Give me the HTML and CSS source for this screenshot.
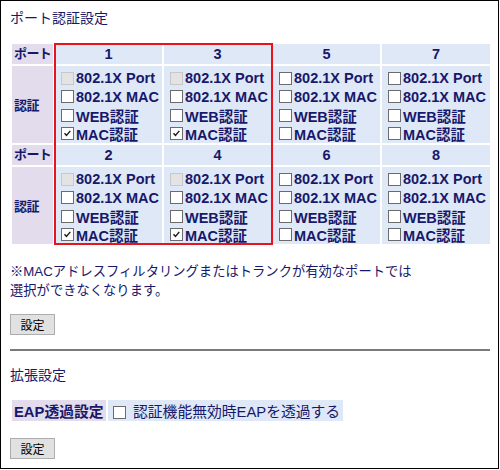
FILE: index.html
```html
<!DOCTYPE html>
<html lang="ja">
<head>
<meta charset="utf-8">
<title>ポート認証設定</title>
<link rel="stylesheet" href="styles.css">
</head>
<body>
<div class="frame">
  <h2 class="title">ポート認証設定</h2>

  <div class="grid-wrap">
    <table class="ports">
      <colgroup>
        <col class="c-label"><col class="c-port"><col class="c-port"><col class="c-port"><col class="c-port last">
      </colgroup>
      <tr class="hdr">
        <th class="lbl">ポート</th><th class="num">1</th><th class="num">3</th><th class="num">5</th><th class="num">7</th>
      </tr>
      <tr class="auth">
        <th class="lbl">認証</th>
        <td>
          <div class="opt"><span class="cb dis"></span>802.1X Port</div>
          <div class="opt"><span class="cb"></span>802.1X MAC</div>
          <div class="opt"><span class="cb"></span>WEB認証</div>
          <div class="opt"><span class="cb on"><svg viewBox="0 0 13 13"><path d="M3 6.2 L5.3 8.8 L9.8 3.4"/></svg></span>MAC認証</div>
        </td>
        <td>
          <div class="opt"><span class="cb dis"></span>802.1X Port</div>
          <div class="opt"><span class="cb"></span>802.1X MAC</div>
          <div class="opt"><span class="cb"></span>WEB認証</div>
          <div class="opt"><span class="cb on"><svg viewBox="0 0 13 13"><path d="M3 6.2 L5.3 8.8 L9.8 3.4"/></svg></span>MAC認証</div>
        </td>
        <td>
          <div class="opt"><span class="cb"></span>802.1X Port</div>
          <div class="opt"><span class="cb"></span>802.1X MAC</div>
          <div class="opt"><span class="cb"></span>WEB認証</div>
          <div class="opt"><span class="cb"></span>MAC認証</div>
        </td>
        <td>
          <div class="opt"><span class="cb"></span>802.1X Port</div>
          <div class="opt"><span class="cb"></span>802.1X MAC</div>
          <div class="opt"><span class="cb"></span>WEB認証</div>
          <div class="opt"><span class="cb"></span>MAC認証</div>
        </td>
      </tr>
      <tr class="hdr">
        <th class="lbl">ポート</th><th class="num">2</th><th class="num">4</th><th class="num">6</th><th class="num">8</th>
      </tr>
      <tr class="auth">
        <th class="lbl">認証</th>
        <td>
          <div class="opt"><span class="cb dis"></span>802.1X Port</div>
          <div class="opt"><span class="cb"></span>802.1X MAC</div>
          <div class="opt"><span class="cb"></span>WEB認証</div>
          <div class="opt"><span class="cb on"><svg viewBox="0 0 13 13"><path d="M3 6.2 L5.3 8.8 L9.8 3.4"/></svg></span>MAC認証</div>
        </td>
        <td>
          <div class="opt"><span class="cb dis"></span>802.1X Port</div>
          <div class="opt"><span class="cb"></span>802.1X MAC</div>
          <div class="opt"><span class="cb"></span>WEB認証</div>
          <div class="opt"><span class="cb on"><svg viewBox="0 0 13 13"><path d="M3 6.2 L5.3 8.8 L9.8 3.4"/></svg></span>MAC認証</div>
        </td>
        <td>
          <div class="opt"><span class="cb"></span>802.1X Port</div>
          <div class="opt"><span class="cb"></span>802.1X MAC</div>
          <div class="opt"><span class="cb"></span>WEB認証</div>
          <div class="opt"><span class="cb"></span>MAC認証</div>
        </td>
        <td>
          <div class="opt"><span class="cb"></span>802.1X Port</div>
          <div class="opt"><span class="cb"></span>802.1X MAC</div>
          <div class="opt"><span class="cb"></span>WEB認証</div>
          <div class="opt"><span class="cb"></span>MAC認証</div>
        </td>
      </tr>
    </table>
    <div class="highlight"></div>
  </div>

  <p class="note"><span class="note-line">※MACアドレスフィルタリングまたはトランクが有効なポートでは</span><span class="note-line">選択ができなくなります。</span></p>

  <button class="btn" type="button">設定</button>

  <hr class="sep">

  <h2 class="title sub">拡張設定</h2>

  <table class="eap">
    <tr>
      <th class="lbl">EAP透過設定</th>
      <td class="val"><span class="cb"></span><span class="val-text">認証機能無効時EAPを透過する</span></td>
    </tr>
  </table>

  <button class="btn btn2" type="button">設定</button>
</div>
</body>
</html>
```

FILE: styles.css
```css
html, body {
  margin: 0;
  padding: 0;
  background: #fff;
}

body {
  font-family: "Liberation Sans", "Noto Sans CJK JP", sans-serif;
  color: #18186a;
}

.frame {
  box-sizing: border-box;
  width: 499px;
  height: 469px;
  border: 1px solid #000;
  padding: 8px 9px;
  overflow: hidden;
}

.title {
  margin: 0;
  font-size: 14px;
  line-height: 18px;
  height: 18px;
  font-weight: normal;
  color: #18186a;
}

.grid-wrap {
  position: relative;
  width: 482px;
  margin-top: 15px;
}

.ports {
  border-collapse: separate;
  border-spacing: 2px;
  table-layout: fixed;
  width: 482px;
  font-size: 14.5px;
  font-weight: bold;
}

.c-label { width: 41px; }
.c-port { width: 107px; }
.c-port.last { width: 108px; }

.ports th,
.ports td {
  padding: 0;
}

.lbl {
  background: #e2dcec;
  text-align: left;
  font-weight: bold;
  vertical-align: middle;
  white-space: nowrap;
  overflow: hidden;
}

.ports .lbl {
  padding-left: 2px;
  font-size: 13px;
  letter-spacing: -0.6px;
}

.hdr th {
  height: 20px;
  line-height: 20px;
}

.num {
  background: #dfe8f7;
  text-align: center;
}

.auth td {
  background: #dfe8f7;
  height: 77px;
  box-sizing: border-box;
  padding: 3px 0 0 0;
  vertical-align: top;
}

.opt {
  display: flex;
  align-items: center;
  height: 18.5px;
  white-space: nowrap;
  overflow: hidden;
}

.cb {
  box-sizing: border-box;
  display: inline-block;
  flex: none;
  width: 13px;
  height: 13px;
  border: 1px solid #6b6b6b;
  background: #fff;
  margin: 0 2px 0 6px;
}

.cb.dis {
  background: #e3e3e3;
  border-color: #c8c8c8;
}

.cb svg {
  display: block;
  width: 11px;
  height: 11px;
  margin: 0;
}

.cb svg path {
  fill: none;
  stroke: #1a1a1a;
  stroke-width: 1.7;
}

.highlight {
  position: absolute;
  left: 44px;
  top: 1px;
  width: 219px;
  height: 202px;
  box-sizing: border-box;
  border: 2px solid #e8141c;
  pointer-events: none;
}

.note {
  margin: 16px 0 0 0;
  font-size: 13.3px;
}

.note-line {
  display: block;
  height: 19px;
  line-height: 19px;
  white-space: nowrap;
}

.btn {
  display: block;
  box-sizing: border-box;
  width: 45px;
  height: 21px;
  margin: 14px 0 0 0;
  padding: 0;
  background: #e1e1e1;
  border: 1px solid #adadad;
  border-radius: 0;
  font-family: "Noto Sans CJK JP", sans-serif;
  font-size: 12px;
  line-height: 19px;
  color: #000;
}

.sep {
  margin: 14px 0 0 0;
  width: 480px;
  height: 0;
  border: 0;
  border-top: 2px solid #7a7a7a;
}

.title.sub {
  margin-top: 15px;
}

.eap {
  margin-top: 14px;
  border-collapse: separate;
  border-spacing: 2px;
  font-size: 14.8px;
}

.eap th,
.eap td {
  height: 21px;
  padding: 0;
}

.eap .lbl {
  width: 90px;
  padding: 0 2px;
  font-weight: bold;
}

.eap .val {
  background: #dfe8f7;
  padding: 0 3px 0 0;
  white-space: nowrap;
}

.eap .val .cb {
  vertical-align: -2px;
  margin: 0 7px 0 5px;
}

.val-text {
  font-weight: normal;
}

.btn2 {
  margin-top: 15px;
}
```
